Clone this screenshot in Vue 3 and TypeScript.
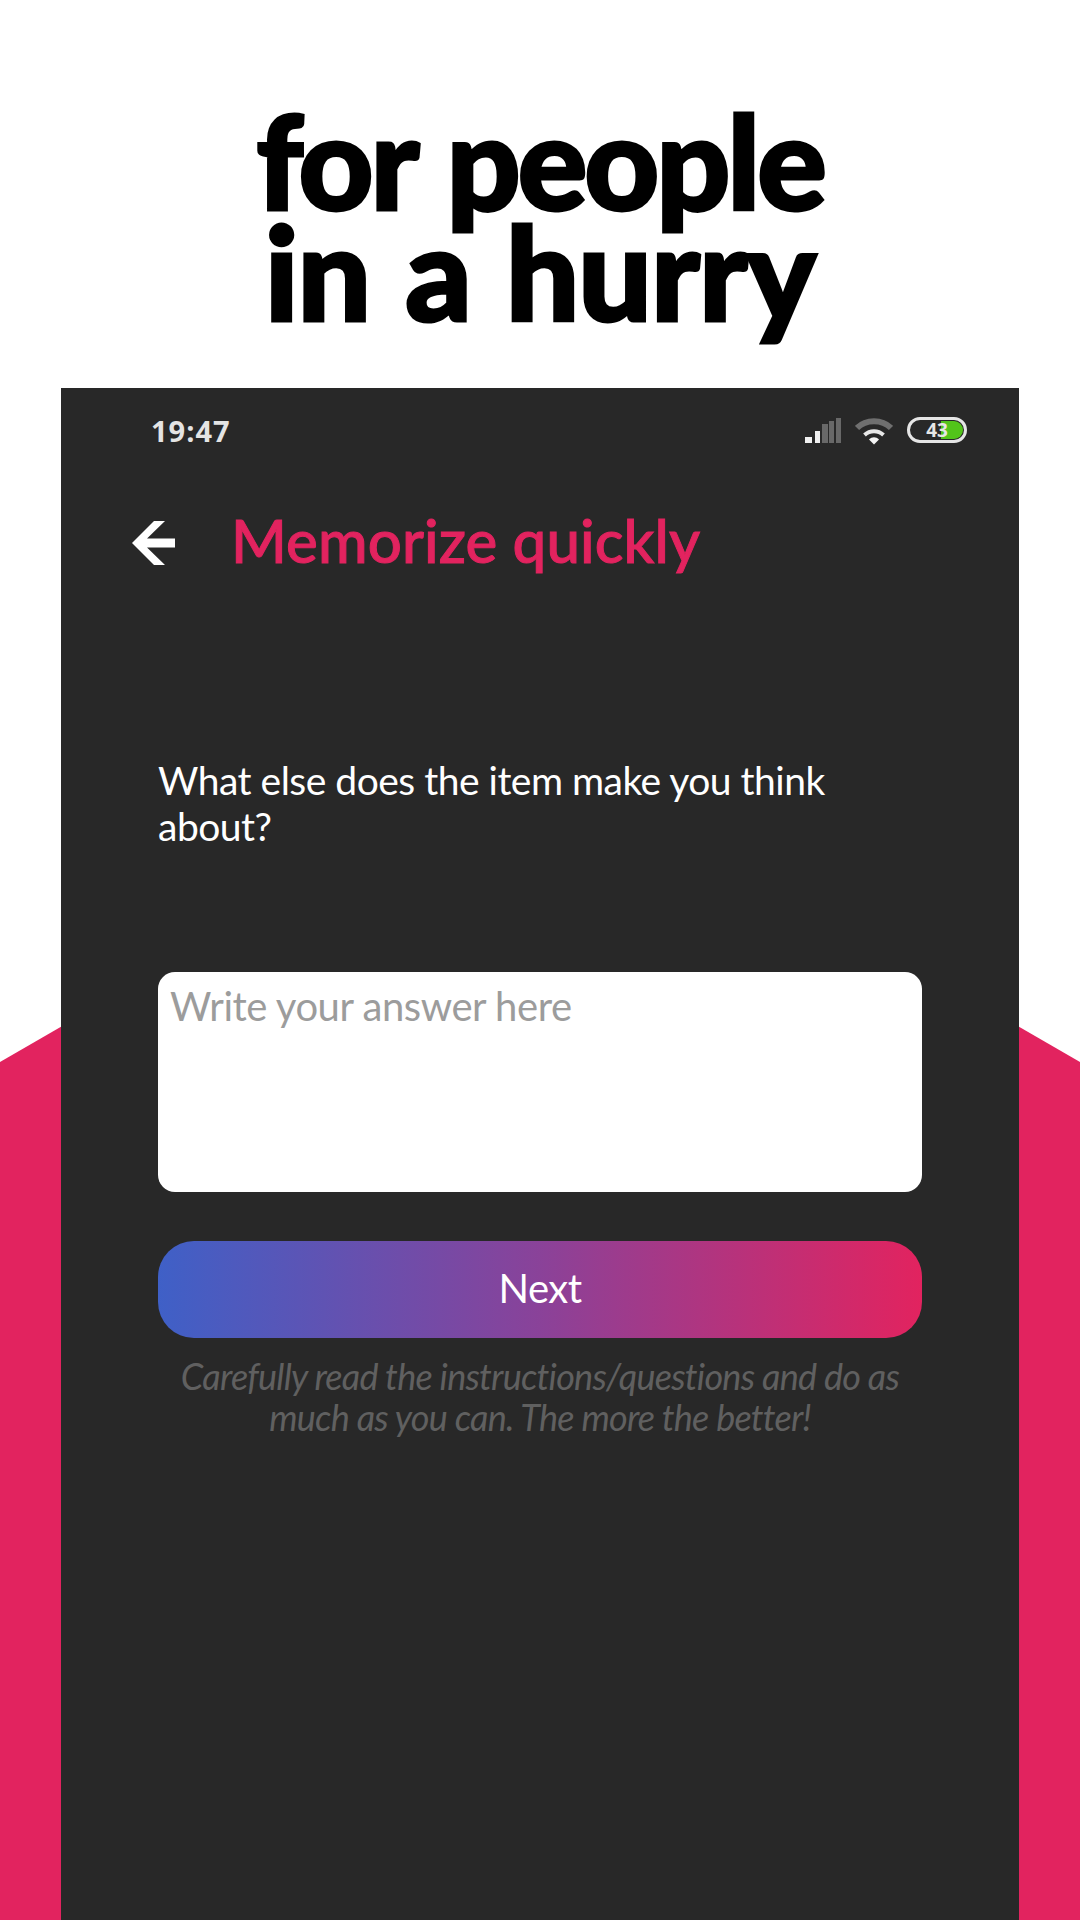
<script setup lang="ts">
const heading: string[] = ['for people', 'in a hurry']
const bars = [
  { x: 0, w: 7, h: 6, c: '#f0f0f0' },
  { x: 10, w: 5, h: 12, c: '#f0f0f0' },
  { x: 17, w: 6, h: 19, c: '#686868' },
  { x: 24, w: 5, h: 22, c: '#686868' },
  { x: 31, w: 5, h: 25, c: '#686868' },
]
</script>

<template>
  <div class="page">
    <div class="backdrop"></div>
    <h1 class="headline">
      <span v-for="line in heading" :key="line" class="headline-line">{{ line }}</span>
    </h1>
    <main class="phone">
      <div class="status">
        <span class="time">19:47</span>
        <div class="status-icons">
          <svg class="signal" width="37" height="26" viewBox="0 0 37 26">
            <rect v-for="b in bars" :key="b.x" :x="b.x" :y="26 - b.h" :width="b.w" :height="b.h" :fill="b.c" />
          </svg>
          <svg class="wifi" width="38" height="28" viewBox="0 0 38 28" fill="none">
            <path d="M2 11C11 2 27 2 36 11" stroke="#6f6f6f" stroke-width="6" />
            <path d="M9.500 18C15 13 23 13 28.500 18" stroke="#e8e8e8" stroke-width="4" />
            <path d="M19 27.500l-5-5c3-3 7-3 10 0z" fill="#f4f4f4" />
          </svg>
          <div class="battery">
            <span class="battery-fill"></span>
            <span class="battery-text">43</span>
          </div>
        </div>
      </div>

      <header class="appbar">
        <svg class="back" width="44" height="44" viewBox="0 0 44 44">
          <path d="M0 22 22 0H33L15 17.500H43V26.500H15L33 44H22Z" fill="#fff" />
        </svg>
        <span class="title">Memorize quickly</span>
      </header>

      <section class="content">
        <p class="question">What else does the item make you think about?</p>
        <div class="answer">Write your answer here</div>
        <button class="next" type="button"><span>Next</span></button>
        <p class="hint">Carefully read the instructions/questions and do as much as you can. The more the better!</p>
      </section>
    </main>
  </div>
</template>

<style>
html, body { margin: 0; background: #fff; }
</style>

<style scoped>
.page {
  position: relative;
  width: 1080px;
  height: 1920px;
  overflow: hidden;
  background: #fff;
  display: flex;
  flex-direction: column;
  font-family: Lato, "Liberation Sans", sans-serif;
}
.backdrop {
  position: absolute;
  inset: 1000px 0 0 0;
  background: #e2235f;
  clip-path: polygon(0 62px, 540px -250px, 1080px 62px, 1080px 920px, 0 920px);
}
.headline {
  position: relative;
  margin: 0;
  height: 388px;
  box-sizing: border-box;
  padding-top: 105px;
  text-align: center;
  font-family: Lato, sans-serif;
  font-weight: 900;
  font-size: 130px;
  line-height: 111px;
  letter-spacing: -3.1px;
  word-spacing: 5px;
  -webkit-text-stroke: 3px #000;
  color: #000;
}
.headline-line { display: block; }
.headline-line:last-child { letter-spacing: -1px; }
.phone {
  position: relative;
  margin: 0 61px;
  flex: 1;
  background: #282828;
  display: flex;
  flex-direction: column;
}
.status {
  height: 86px;
  box-sizing: border-box;
  padding: 24px 52px 0 90px;
  display: flex;
  justify-content: space-between;
  align-items: flex-start;
}
.time {
  font-family: "Open Sans", sans-serif;
  font-weight: 700;
  font-size: 29px;
  line-height: 38px;
  letter-spacing: 1px;
  color: #e4e4e4;
}
.status-icons {
  display: flex;
  align-items: flex-start;
  gap: 13px;
  padding-top: 5px;
}
.battery {
  position: relative;
  width: 60px;
  height: 26px;
  box-sizing: border-box;
  margin-left: 1px;
  border: 3px solid #e6e6e6;
  border-radius: 13px;
  display: flex;
  align-items: center;
  justify-content: center;
}
.battery-fill {
  position: absolute;
  top: 1px;
  bottom: 1px;
  right: 1px;
  width: 22px;
  background: #52c41a;
  border-radius: 0 10px 10px 0;
}
.battery-text {
  position: relative;
  font-family: "Open Sans", sans-serif;
  font-weight: 700;
  font-size: 19px;
  line-height: 20px;
  color: #e6e6e6;
}
.appbar {
  display: flex;
  align-items: center;
  height: 76px;
  margin-top: 28px;
  padding-left: 71px;
}
.back {
  flex: none;
  margin-top: 5px;
}
.title {
  margin-left: 55px;
  font-weight: 500;
  font-size: 60px;
  line-height: 76px;
  letter-spacing: 0.1px;
  -webkit-text-stroke: 1px #e2235f;
  color: #e2235f;
}
.content {
  padding: 0 97px;
  display: flex;
  flex-direction: column;
}
.question {
  margin: 179px 0 0;
  font-size: 39px;
  line-height: 46px;
  letter-spacing: -0.5px;
  color: #fff;
}
.answer {
  margin-top: 123px;
  height: 220px;
  box-sizing: border-box;
  padding: 9px 12px;
  background: #fff;
  border-radius: 17px;
  font-size: 40px;
  line-height: 50px;
  letter-spacing: -0.45px;
  color: #9c9c9c;
}
.next {
  margin-top: 49px;
  height: 97px;
  padding: 0 0 3px;
  border: 0;
  border-radius: 36px;
  background: linear-gradient(90deg, #3f60c7 0%, #8a4299 50%, #e2235f 100%);
  color: #fff;
  font-family: inherit;
  font-size: 40px;
  letter-spacing: -0.5px;
}
.hint {
  margin: 18px 0 0;
  padding: 0 20px;
  text-align: center;
  font-style: italic;
  font-weight: 400;
  font-size: 36px;
  line-height: 41px;
  letter-spacing: -0.75px;
  color: #606060;
}
</style>
